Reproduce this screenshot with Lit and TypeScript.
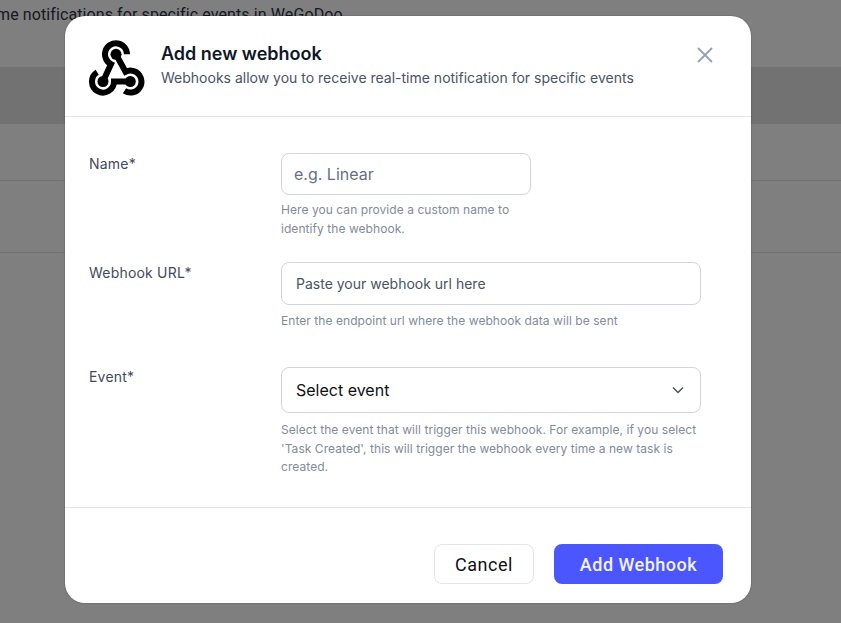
import { LitElement, html, css } from "lit";
import { customElement } from "lit/decorators.js";

@customElement("app-root")
export class AppRoot extends LitElement {
  static styles = css`
    :host { display: block; width: 841px; height: 623px; position: relative; overflow: hidden; font-family: Inter, sans-serif; background: #fff; }
    .page { height: 623px; display: flex; flex-direction: column; }
    .intro { height: 67px; box-sizing: border-box; padding-top: 5px; font: 16px/20px Roboto, sans-serif; letter-spacing: .1px; color: #2b3445; white-space: nowrap; margin-left: -4px; }
    .row { border-top: 1px solid #e2e2e2; box-sizing: border-box; }
    .thead { height: 56px; background: #e4e4e6; }
    .r1 { height: 57px; }
    .r2 { height: 72px; }
    .scrim { position: absolute; inset: 0; background: rgba(0,0,0,.5); }
    .modal { position: absolute; left: 65px; top: 16px; width: 686px; height: 587px; background: #fff; border-radius: 20px; display: flex; flex-direction: column; box-shadow: 0 0 2px rgba(0,0,0,.35); }
    .head { height: 101px; box-sizing: border-box; border-bottom: 1px solid #e2e5ec; display: flex; padding: 24px 24px 0; gap: 16px; position: relative; }
    .logo { width: 56px; height: 56px; flex: none; }
    .title { font-size: 18px; line-height: 28px; font-weight: 600; color: #101828; }
    .sub { font-size: 14px; line-height: 20px; color: #475467; }
    .close { position: absolute; left: 632px; top: 31px; width: 16px; height: 16px; }
    .form { flex: 1; display: flex; flex-direction: column; padding: 0 24px; border-bottom: 1px solid #e2e5ec; }
    .f { display: grid; grid-template-columns: 192px 420px; }
    .f label { font-size: 14px; line-height: 20px; font-weight: 400; color: #3f4a5f; padding-top: 1px; letter-spacing: .2px; }
    .f3 label { padding-top: 0; }
    .f1 { padding-top: 36px; height: 109px; }
    .f2 { height: 105px; }
    .input { box-sizing: border-box; border: 1px solid #d0d5dd; border-radius: 8px; display: flex; align-items: center; background: #fff; }
    .i1 { width: 250px; height: 42px; padding-left: 12px; font-size: 16px; color: #667085; }
    .i2 { width: 420px; height: 43px; padding-left: 14px; font-size: 14px; color: #475467; }
    .i3 { width: 420px; height: 46px; padding: 0 14px; font-size: 16px; color: #101010; justify-content: space-between; }
    .hint { font-size: 12px; line-height: 18.5px; color: #828b9b; margin-top: 7px; letter-spacing: .06px; }
    .f1 .hint { margin-top: 6px; }
    .f3 .hint { margin-top: 8px; }
    .w1 { width: 250px; }
    .foot { height: 95px; box-sizing: border-box; padding: 36px 28px 0 0; display: flex; justify-content: flex-end; gap: 20px; }
    .btn { height: 40px; box-sizing: border-box; border-radius: 8px; font: 500 18px/1 Roboto, sans-serif; letter-spacing: .5px; display: flex; align-items: center; justify-content: center; padding-top: 1px; }
    .cancel { width: 100px; border: 1px solid #e2e5ec; color: #101010; font-weight: 400; }
    .add { width: 169px; background: #4b56ff; color: #f2f3ff; }
  `;
  render() {
    return html`
      <div class="page">
        <div class="intro">me notifications for specific events in WeGoDoo</div>
        <div class="row thead"></div>
        <div class="row r1"></div>
        <div class="row r2"></div>
        <div class="row"></div>
      </div>
      <div class="scrim"></div>
      <div class="modal">
        <div class="head">
          <svg class="logo" viewBox="0 0 56 56" fill="none" stroke="#000" stroke-width="6">
            <path d="M38 14.3A11 11 0 1 0 22 24.1L14 41.5" />
            <path d="M8.2 32.2A11 11 0 1 0 25 41.5H41.3" />
            <path d="M35.5 50.8A11 11 0 1 0 36.5 31.8L27 14.3" />
            <circle cx="27" cy="14.3" r="5.5" fill="#000" stroke="none" />
            <circle cx="14" cy="41.5" r="5.5" fill="#000" stroke="none" />
            <circle cx="41.3" cy="41.5" r="5.5" fill="#000" stroke="none" />
          </svg>
          <div>
            <div class="title">Add new webhook</div>
            <div class="sub">Webhooks allow you to receive real-time notification for specific events</div>
          </div>
          <svg class="close" viewBox="0 0 16 16" stroke="#94a0b4" stroke-width="1.8" fill="none"><path d="M1 1L15 15M15 1L1 15"/></svg>
        </div>
        <div class="form">
          <div class="f f1"><label>Name*</label><div>
            <div class="input i1">e.g. Linear</div>
            <div class="hint w1">Here you can provide a custom name to identify the webhook.</div>
          </div></div>
          <div class="f f2"><label>Webhook URL*</label><div>
            <div class="input i2">Paste your webhook url here</div>
            <div class="hint">Enter the endpoint url where the webhook data will be sent</div>
          </div></div>
          <div class="f f3"><label>Event*</label><div>
            <div class="input i3">Select event
              <svg width="16" height="16" viewBox="0 0 16 16" fill="none" stroke="#475467" stroke-width="1.5"><path d="M3 5.5L8 10.5L13 5.5"/></svg>
            </div>
            <div class="hint">Select the event that will trigger this webhook. For example, if you select 'Task Created', this will trigger the webhook every time a new task is created.</div>
          </div></div>
        </div>
        <div class="foot">
          <div class="btn cancel">Cancel</div>
          <div class="btn add">Add Webhook</div>
        </div>
      </div>
    `;
  }
}
